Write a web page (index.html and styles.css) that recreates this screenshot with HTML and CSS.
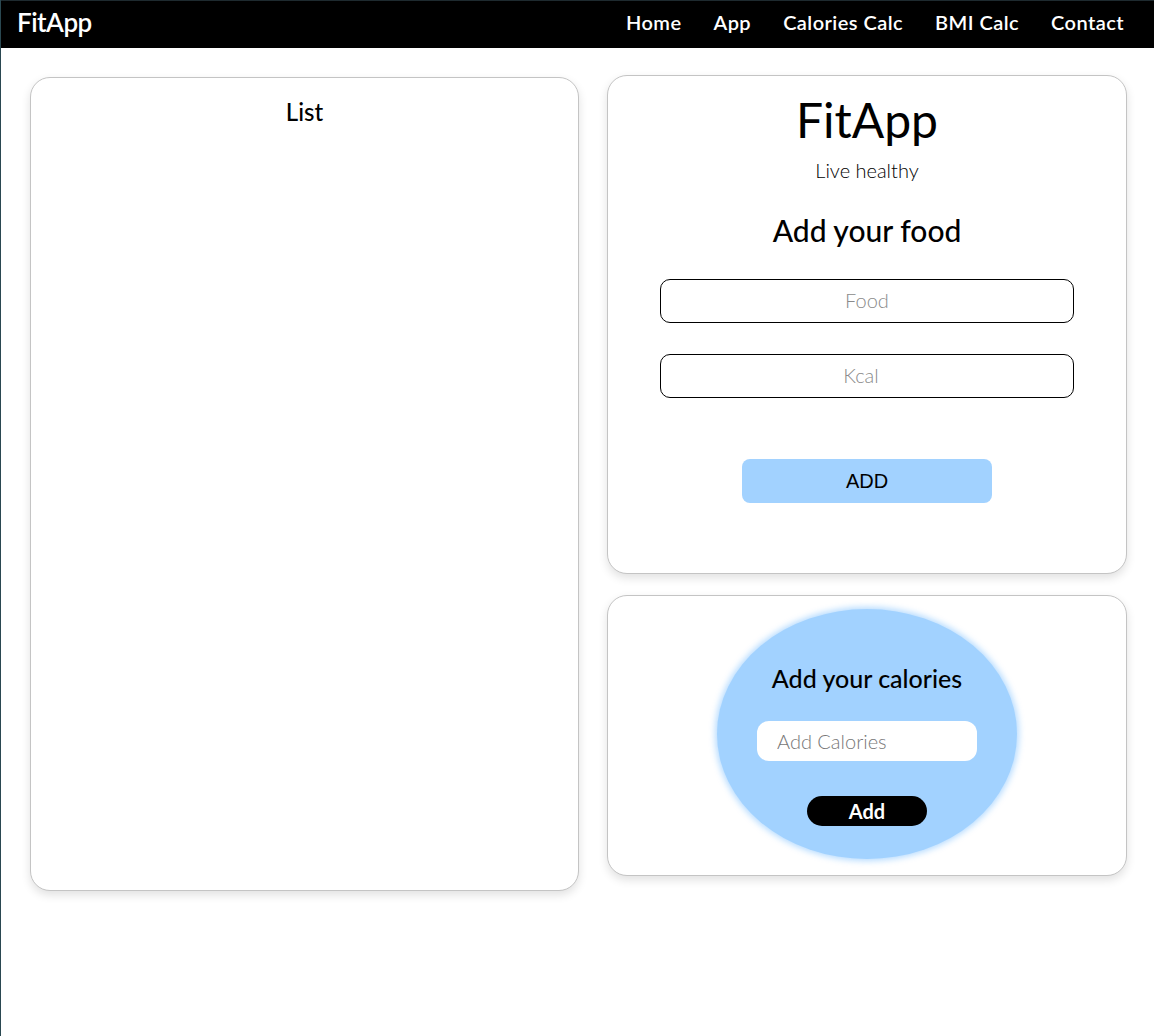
FILE: index.html
```html
<!DOCTYPE html>
<html lang="en">
<head>
<meta charset="utf-8">
<title>FitApp</title>
<link rel="stylesheet" href="styles.css">
</head>
<body>
<nav class="navbar">
  <div class="brand">FitApp</div>
  <ul class="links">
    <li>Home</li>
    <li>App</li>
    <li>Calories Calc</li>
    <li>BMI Calc</li>
    <li>Contact</li>
  </ul>
</nav>
<main class="main">
  <section class="card list-card">
    <h2 class="list-title">List</h2>
  </section>
  <div class="right-col">
    <section class="card food-card">
      <h1 class="app-title">FitApp</h1>
      <p class="tagline">Live healthy</p>
      <h2 class="food-title">Add your food</h2>
      <input class="field" type="text" placeholder="Food">
      <input class="field field-kcal" type="text" placeholder="Kcal">
      <button class="add-btn">ADD</button>
    </section>
    <section class="card cal-card">
      <div class="bubble">
        <h3 class="cal-title">Add your calories</h3>
        <input class="cal-input" type="text" placeholder="Add Calories">
        <button class="cal-btn">Add</button>
      </div>
    </section>
  </div>
</main>
</body>
</html>
```
FILE: styles.css
```css
* { box-sizing: border-box; }
html, body { margin: 0; padding: 0; }
body {
  font-family: Lato, "Open Sans", sans-serif;
  background: #fff;
  border-left: 1px solid #2a4851;
  min-height: 1036px;
  color: #000;
}
.navbar {
  height: 48px;
  background: #000;
  border-top: 1px solid #1e2a2f;
  display: flex;
  align-items: center;
  justify-content: space-between;
  padding: 0 30px 5px 16px;
}
.brand {
  color: #fff;
  font-size: 26px;
  font-weight: 600;
  letter-spacing: -0.5px;
}
.links {
  list-style: none;
  margin: 0;
  padding: 0;
  display: flex;
  gap: 32px;
}
.links li {
  color: #fff;
  font-size: 20px;
  font-weight: 600;
  letter-spacing: 0.45px;
}
.main {
  display: grid;
  grid-template-columns: 549px 520px;
  gap: 28px;
  padding: 27px 0 0 29px;
  align-items: start;
}
.card {
  background: #fff;
  border: 1px solid #c4c4c4;
  border-radius: 20px;
  box-shadow: 0 4px 10px rgba(0,0,0,0.12);
}
.list-card {
  height: 814px;
  margin-top: 2px;
  text-align: center;
}
.list-title {
  margin: 19px 0 0;
  font-size: 24px;
  font-weight: 500;
}
.right-col {
  display: flex;
  flex-direction: column;
  gap: 21px;
}
.food-card {
  height: 499px;
  display: flex;
  flex-direction: column;
  align-items: center;
}
.app-title {
  margin: 16px 0 0;
  font-size: 48px;
  font-weight: 400;
  line-height: 56px;
}
.tagline {
  margin: 10px 0 0;
  font-size: 20px;
  font-weight: 300;
  line-height: 24px;
}
.food-title {
  margin: 30px 0 0;
  font-size: 30px;
  font-weight: 500;
  line-height: 36px;
}
.field {
  width: 414px;
  height: 44px;
  margin-top: 31px;
  border: 1px solid #000;
  border-radius: 10px;
  font-family: inherit;
  font-size: 20px;
  text-align: center;
  background: #fff;
  padding-bottom: 3px;
}
.field-kcal { margin-top: 31px; padding-right: 14px; }
.field::placeholder { color: #8a8a8a; font-weight: 300; }
.add-btn {
  width: 250px;
  height: 44px;
  margin-top: 61px;
  border: none;
  border-radius: 8px;
  background: #a2d2ff;
  font-family: Arial, "Liberation Sans", sans-serif;
  font-size: 20px;
  color: #000;
}
.cal-card {
  height: 281px;
  display: flex;
  justify-content: center;
  padding-top: 13px;
}
.bubble {
  width: 300px;
  height: 250px;
  border-radius: 50%;
  background: #a2d2ff;
  box-shadow: 0 0 6px 2px rgba(162,210,255,0.8);
  display: flex;
  flex-direction: column;
  align-items: center;
}
.cal-title {
  margin: 54px 0 0;
  font-size: 25px;
  font-weight: 500;
  line-height: 30px;
}
.cal-input {
  width: 220px;
  height: 40px;
  margin-top: 28px;
  border: none;
  border-radius: 12px;
  background: #fff;
  padding: 0 20px;
  font-family: inherit;
  font-size: 20px;
}
.cal-input::placeholder { color: #777; font-weight: 300; }
.cal-btn {
  width: 120px;
  height: 30px;
  margin-top: 35px;
  border: none;
  border-radius: 15px;
  background: #000;
  color: #fff;
  font-family: inherit;
  font-size: 20px;
  font-weight: 700;
  line-height: 30px;
  padding: 0;
}
```
